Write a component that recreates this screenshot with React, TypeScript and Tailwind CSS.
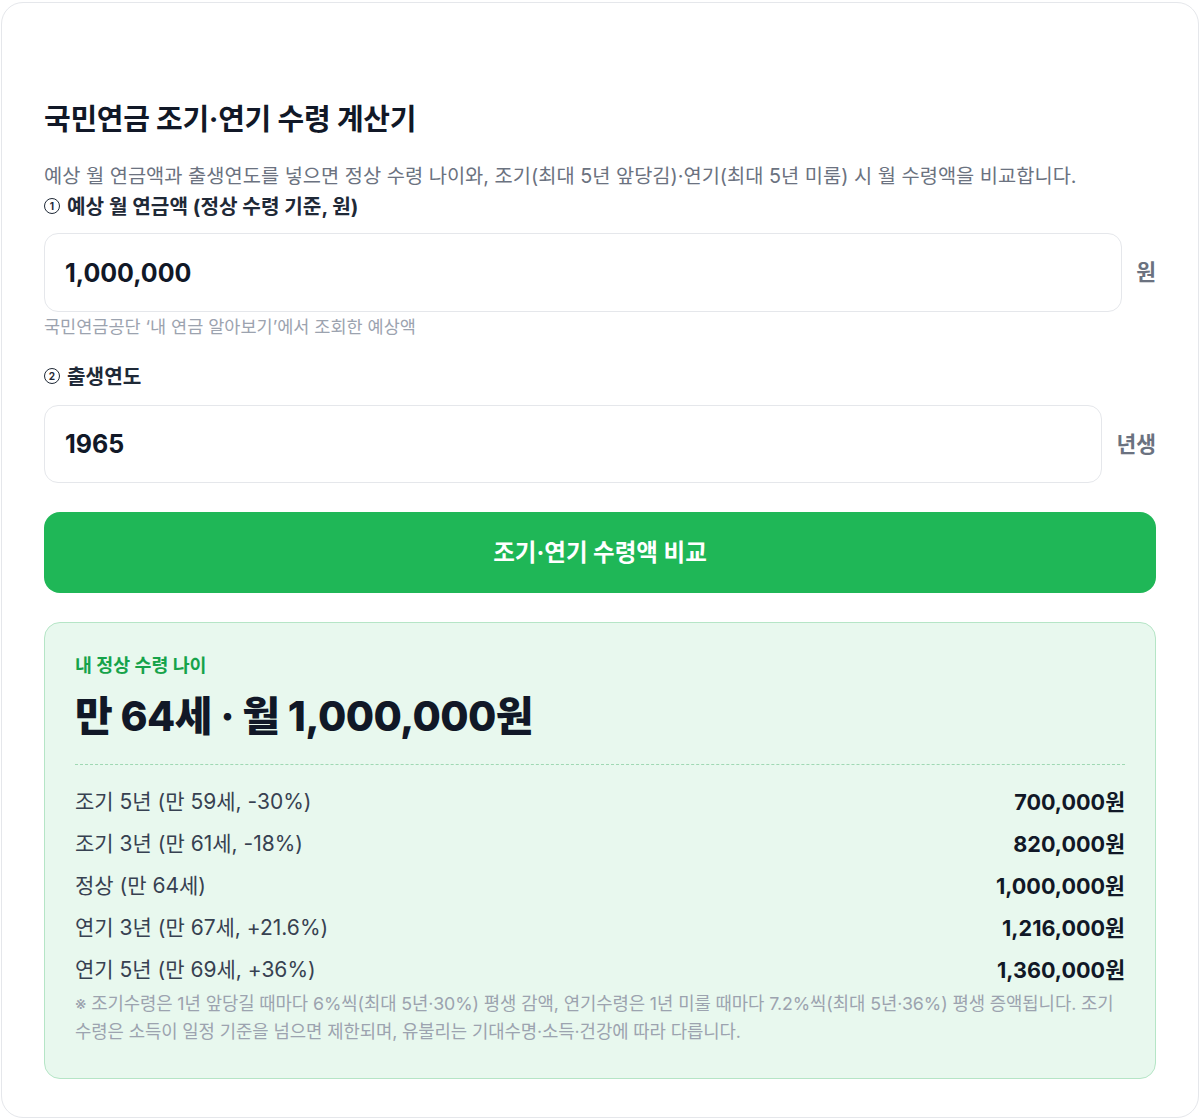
import React from "react";

const rows = [
  { label: "조기 5년 (만 59세, -30%)", value: "700,000원" },
  { label: "조기 3년 (만 61세, -18%)", value: "820,000원" },
  { label: "정상 (만 64세)", value: "1,000,000원" },
  { label: "연기 3년 (만 67세, +21.6%)", value: "1,216,000원" },
  { label: "연기 5년 (만 69세, +36%)", value: "1,360,000원" },
];

function Circled({ n }: { n: string }) {
  return (
    <span className="mr-[7px] inline-flex h-[16px] w-[16px] translate-y-[-2px] items-center justify-center rounded-full border-[1.6px] border-current align-middle text-[10px] leading-none font-bold">
      {n}
    </span>
  );
}

export default function App() {
  return (
    <div
      className="w-[1200px] bg-white p-[1px] pt-[2px]"
      style={{ fontFamily: 'Inter, "Noto Sans CJK KR", sans-serif' }}
    >
      <div className="rounded-[22px] border border-[#e5e7eb] bg-white px-[42px] pt-[98px] pb-[38px]">
        <h1 className="text-[29px] leading-[38px] font-bold text-[#111827] tracking-[-0.3px]">
          국민연금 조기·연기 수령 계산기
        </h1>
        <p className="mt-[23px] text-[19.8px] leading-[28px] text-[#6b7280]">
          예상 월 연금액과 출생연도를 넣으면 정상 수령 나이와, 조기(최대 5년 앞당김)·연기(최대 5년 미룸) 시 월 수령액을 비교합니다.
        </p>
        <label className="mt-[3px] block text-[20.2px] leading-[28px] font-bold text-[#1f2937]">
          <Circled n="1" />예상 월 연금액 (정상 수령 기준, 원)
        </label>
        <div className="mt-[12px] flex items-center gap-[14px]">
          <input
            readOnly
            value="1,000,000"
            className="h-[79px] flex-1 rounded-[14px] border border-[#e5e7eb] bg-white px-[20px] text-[25px] font-bold text-[#111827] outline-none"
          />
          <span className="text-[21.5px] font-bold text-[#6b7280]">원</span>
        </div>
        <p className="mt-[4px] text-[17.5px] leading-[22px] text-[#9ca3af]">
          국민연금공단 ‘내 연금 알아보기’에서 조회한 예상액
        </p>
        <label className="mt-[25px] block text-[20.2px] leading-[28px] font-bold text-[#1f2937]">
          <Circled n="2" />출생연도
        </label>
        <div className="mt-[14px] flex items-center gap-[14px]">
          <input
            readOnly
            value="1965"
            className="h-[78px] flex-1 rounded-[14px] border border-[#e5e7eb] bg-white px-[20px] text-[25px] font-bold text-[#111827] outline-none"
          />
          <span className="text-[21.5px] font-bold text-[#6b7280]">년생</span>
        </div>
        <button className="mt-[29px] flex h-[81px] w-full items-center justify-center rounded-[16px] bg-[#1fb757] text-[23.5px] font-bold text-white">
          조기·연기 수령액 비교
        </button>
        <div className="mt-[29px] rounded-[16px] border border-[#b5e5c6] bg-[#e8f8ee] px-[30px] pt-[30px] pb-[32px]">
          <div className="text-[18.4px] leading-[24px] font-bold text-[#16a34a]">내 정상 수령 나이</div>
          <div className="mt-[14px] text-[41px] leading-[50px] font-extrabold text-[#111827] tracking-[-0.6px]">
            만 64세 · 월 1,000,000원
          </div>
          <div className="mt-[23px] border-t border-dashed border-[#9fd8b3]" />
          <div className="mt-[22px] flex flex-col gap-[12px]">
            {rows.map((r) => (
              <div key={r.label} className="flex items-center justify-between leading-[30px]">
                <span className="text-[21px] text-[#374151]">{r.label}</span>
                <span className="text-[21.6px] font-bold text-[#111827]">{r.value}</span>
              </div>
            ))}
          </div>
          <p className="mt-[5px] text-[17.8px] leading-[28px] text-[#9ca3af] tracking-[-0.1px]">
            ※ 조기수령은 1년 앞당길 때마다 6%씩(최대 5년·30%) 평생 감액, 연기수령은 1년 미룰 때마다 7.2%씩(최대 5년·36%) 평생 증액됩니다. 조기수령은 소득이 일정 기준을 넘으면 제한되며, 유불리는 기대수명·소득·건강에 따라 다릅니다.
          </p>
        </div>
      </div>
    </div>
  );
}
